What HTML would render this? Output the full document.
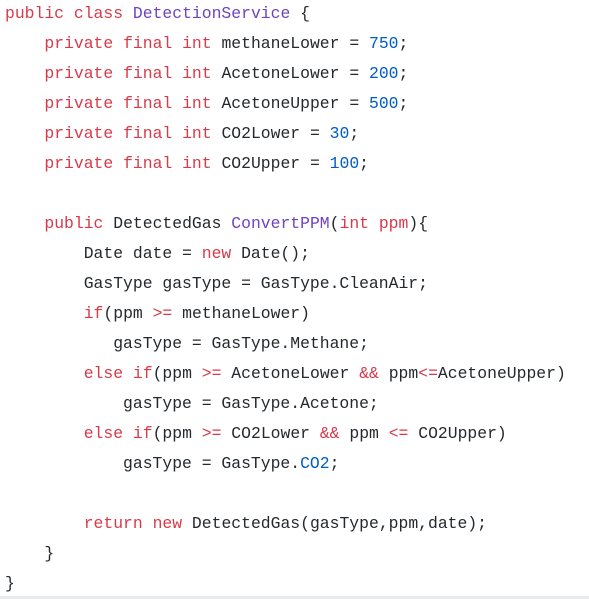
<!DOCTYPE html>
<html><head><style>
html,body{margin:0;padding:0;background:#fff;width:589px;height:599px;overflow:hidden;position:relative}
pre{margin:0;position:absolute;top:-1px;left:5px;font-family:"Liberation Mono",monospace;font-size:16.4px;line-height:30px;color:#24292e}
.k{color:#d73a49}.t{color:#6f42c1}.n{color:#005cc5}
.bar{position:absolute;left:0;right:0;bottom:0;height:3px;background:#e8eaed}
</style></head><body>
<pre><span class="k">public</span> <span class="k">class</span> <span class="t">DetectionService</span> {
    <span class="k">private</span> <span class="k">final</span> <span class="k">int</span> methaneLower = <span class="n">750</span>;
    <span class="k">private</span> <span class="k">final</span> <span class="k">int</span> AcetoneLower = <span class="n">200</span>;
    <span class="k">private</span> <span class="k">final</span> <span class="k">int</span> AcetoneUpper = <span class="n">500</span>;
    <span class="k">private</span> <span class="k">final</span> <span class="k">int</span> CO2Lower = <span class="n">30</span>;
    <span class="k">private</span> <span class="k">final</span> <span class="k">int</span> CO2Upper = <span class="n">100</span>;

    <span class="k">public</span> DetectedGas <span class="t">ConvertPPM</span>(<span class="k">int</span> <span class="k">ppm</span>){
        Date date = <span class="k">new</span> Date();
        GasType gasType = GasType.CleanAir;
        <span class="k">if</span>(ppm <span class="k">&gt;=</span> methaneLower)
           gasType = GasType.Methane;
        <span class="k">else</span> <span class="k">if</span>(ppm <span class="k">&gt;=</span> AcetoneLower <span class="k">&amp;&amp;</span> ppm<span class="k">&lt;=</span>AcetoneUpper)
            gasType = GasType.Acetone;
        <span class="k">else</span> <span class="k">if</span>(ppm <span class="k">&gt;=</span> CO2Lower <span class="k">&amp;&amp;</span> ppm <span class="k">&lt;=</span> CO2Upper)
            gasType = GasType.<span class="n">CO2</span>;

        <span class="k">return</span> <span class="k">new</span> DetectedGas(gasType,ppm,date);
    }
}</pre>
<div class="bar"></div>
</body></html>
